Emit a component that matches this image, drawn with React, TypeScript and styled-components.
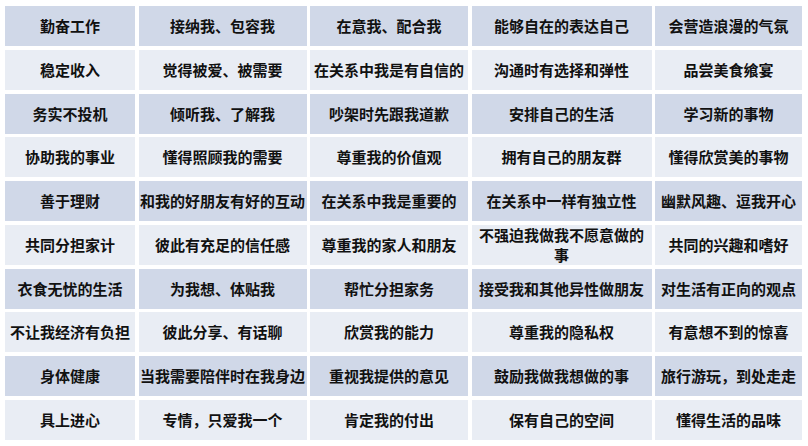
import React from 'react';
import styled, { createGlobalStyle } from 'styled-components';

const ROWS: string[][] = [
  ['勤奋工作', '接纳我、包容我', '在意我、配合我', '能够自在的表达自己', '会营造浪漫的气氛'],
  ['稳定收入', '觉得被爱、被需要', '在关系中我是有自信的', '沟通时有选择和弹性', '品尝美食飨宴'],
  ['务实不投机', '倾听我、了解我', '吵架时先跟我道歉', '安排自己的生活', '学习新的事物'],
  ['协助我的事业', '懂得照顾我的需要', '尊重我的价值观', '拥有自己的朋友群', '懂得欣赏美的事物'],
  ['善于理财', '和我的好朋友有好的互动', '在关系中我是重要的', '在关系中一样有独立性', '幽默风趣、逗我开心'],
  ['共同分担家计', '彼此有充足的信任感', '尊重我的家人和朋友', '不强迫我做我不愿意做的事', '共同的兴趣和嗜好'],
  ['衣食无忧的生活', '为我想、体贴我', '帮忙分担家务', '接受我和其他异性做朋友', '对生活有正向的观点'],
  ['不让我经济有负担', '彼此分享、有话聊', '欣赏我的能力', '尊重我的隐私权', '有意想不到的惊喜'],
  ['身体健康', '当我需要陪伴时在我身边', '重视我提供的意见', '鼓励我做我想做的事', '旅行游玩，到处走走'],
  ['具上进心', '专情，只爱我一个', '肯定我的付出', '保有自己的空间', '懂得生活的品味'],
];

const GlobalStyle = createGlobalStyle`
  html, body {
    margin: 0;
    padding: 0;
    background: #fff;
  }
  body {
    font-family: "Noto Sans CJK SC", "Noto Sans", sans-serif;
  }
`;

const App = () => {
  return (
    <>
      <GlobalStyle />
      <Page>
        <Table>
          {ROWS.map((row, r) =>
            row.map((text, c) => (
              <Cell key={`${r}-${c}`} $dark={r % 2 === 0}>
                {text}
              </Cell>
            ))
          )}
        </Table>
      </Page>
    </>
  );
};

export default App;

const Page = styled.div`
  width: 808px;
  height: 446px;
  padding: 6px 0 0 5px;
  box-sizing: border-box;
`;

const Table = styled.div`
  display: grid;
  grid-template-columns: 130px 168px 158px 180px 147px;
  grid-template-rows: repeat(10, 40px);
  column-gap: 3.5px;
  row-gap: 3.78px;
`;

const Cell = styled.div<{ $dark: boolean }>`
  display: flex;
  align-items: center;
  justify-content: center;
  text-align: center;
  padding: 0 1px;
  background: ${({ $dark }) => ($dark ? '#d0d8e8' : '#e9edf4')};
  color: #111;
  font-size: 15px;
  font-weight: 700;
  line-height: 20px;
`;
